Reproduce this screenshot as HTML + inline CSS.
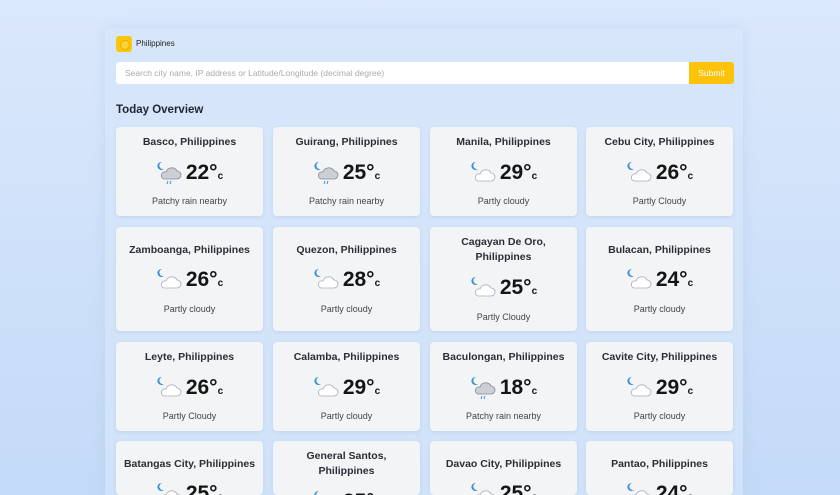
<!DOCTYPE html>
<html style="width:840px;height:495px;overflow:hidden"><head><style>
*{margin:0;padding:0;box-sizing:border-box}
body{width:840px;height:495px;overflow:hidden;background:linear-gradient(180deg,#dbe8fb 0%,#c3daf8 100%);font-family:"Liberation Sans",sans-serif;position:relative}
.wrap{position:absolute;left:105px;top:28px;width:638px;height:467px;background:rgba(214,229,250,.7);border-radius:6px 6px 0 0;box-shadow:0 0 12px rgba(150,180,220,.25)}
.logo{position:absolute;left:116px;top:36px;width:16px;height:16px;background:#f8c70e;border-radius:3px}
.logo:after{content:"";position:absolute;left:4px;top:4px;width:8px;height:8px;border-radius:50%;border:1px solid #f0a800;background:#fcd23a}
.brand{position:absolute;left:136px;top:39px;font-size:8px;color:#222}
.search{position:absolute;left:116px;top:62px;width:574px;height:22px;background:#fff;border-radius:3px 0 0 3px;font-size:8.5px;color:#aaa;padding:6px 9px}
.btn{position:absolute;left:689px;top:62px;width:45px;height:22px;background:#fcc30a;border-radius:0 3px 3px 0;color:#fff;font-size:8.5px;text-align:center;line-height:22px}
h2{position:absolute;left:116px;top:104px;font-size:11.5px;font-weight:bold;color:#1e2633}
.card{position:absolute;width:147px;background:#f2f4f6;border-radius:4px;text-align:center;box-shadow:0 1px 3px rgba(120,150,190,.2);overflow:hidden}
.t{font-size:10.5px;font-weight:bold;color:#2a2e35;line-height:15px;position:absolute;left:0;right:0}
.tp{position:absolute;left:0;right:0;display:flex;justify-content:center;align-items:center;height:26px}
.tp b{font-size:21px;color:#151515;margin-left:4px}
.tp i{font-style:normal;font-size:10px;font-weight:bold;align-self:flex-end;margin-bottom:4px;color:#151515}
.d{position:absolute;left:0;right:0;font-size:9px;color:#444}
</style></head><body>
<div class="wrap"></div>
<div class="logo"></div><div class="brand">Philippines</div>
<div class="search">Search city name, IP address or Latitude/Longitude (decimal degree)</div>
<div class="btn">Submit</div>
<h2>Today Overview</h2>
<svg width="0" height="0" style="position:absolute"><defs>
<g id="pc"><path d="M6 1a4 4 0 1 0 2 7a3.2 3.2 0 1 1-2-7z" fill="#3b8fd6"/><path d="M8 20h13a4 4 0 0 0 0-8a6 6 0 0 0-11 1a3.5 3.5 0 0 0-2 7z" fill="#fff" stroke="#aab" stroke-width=".8"/></g>
<g id="rn"><path d="M6 1a4 4 0 1 0 2 7a3.2 3.2 0 1 1-2-7z" fill="#3b8fd6"/><path d="M8 18h13a4 4 0 0 0 0-8a6 6 0 0 0-11 1a3.5 3.5 0 0 0-2 7z" fill="#ccd0d6" stroke="#889" stroke-width=".8"/><path d="M12 20l-1 3M15 20l-1 3" stroke="#3b8fd6" stroke-width="1"/></g>
</defs></svg>
<div id="cards"></div>
<script>
var D=[
[116,127,89,["Basco, Philippines"],22,"Patchy rain nearby",1],
[273,127,89,["Guirang, Philippines"],25,"Patchy rain nearby",1],
[430,127,89,["Manila, Philippines"],29,"Partly cloudy",0],
[586,127,89,["Cebu City, Philippines"],26,"Partly Cloudy",0],
[116,227,104,["Zamboanga, Philippines"],26,"Partly cloudy",0],
[273,227,104,["Quezon, Philippines"],28,"Partly cloudy",0],
[430,227,104,["Cagayan De Oro,","Philippines"],25,"Partly Cloudy",0],
[586,227,104,["Bulacan, Philippines"],24,"Partly cloudy",0],
[116,342,89,["Leyte, Philippines"],26,"Partly Cloudy",0],
[273,342,89,["Calamba, Philippines"],29,"Partly cloudy",0],
[430,342,89,["Baculongan, Philippines"],18,"Patchy rain nearby",1],
[586,342,89,["Cavite City, Philippines"],29,"Partly cloudy",0],
[116,441,104,["Batangas City, Philippines"],25,"",0],
[273,441,104,["General Santos,","Philippines"],25,"",0],
[430,441,104,["Davao City, Philippines"],25,"",0],
[586,441,104,["Pantao, Philippines"],24,"",0]];
var h="";
D.forEach(function(c){
 var two=c[3].length>1, tt, tp, dd;
 if(c[2]==104&&!two){tt=16;tp=40;dd=77;} else if(two){tt=8;tp=48;dd=85;} else {tt=8;tp=33;dd=69;}
 var hh=c[1]+c[2]>495?495-c[1]:c[2];
 h+='<div class="card" style="left:'+c[0]+'px;top:'+c[1]+'px;height:'+hh+'px">';
 h+='<div class="t" style="top:'+tt+'px">'+c[3].join('<br>')+'</div>';
 h+='<div class="tp" style="top:'+tp+'px"><svg width="26" height="24" viewBox="0 0 26 24"><use href="#'+(c[6]?'rn':'pc')+'"/></svg><b>'+c[4]+'°</b><i>c</i></div>';
 h+='<div class="d" style="top:'+dd+'px">'+c[5]+'</div></div>';
});
document.getElementById('cards').innerHTML=h;
</script>
</body></html>
